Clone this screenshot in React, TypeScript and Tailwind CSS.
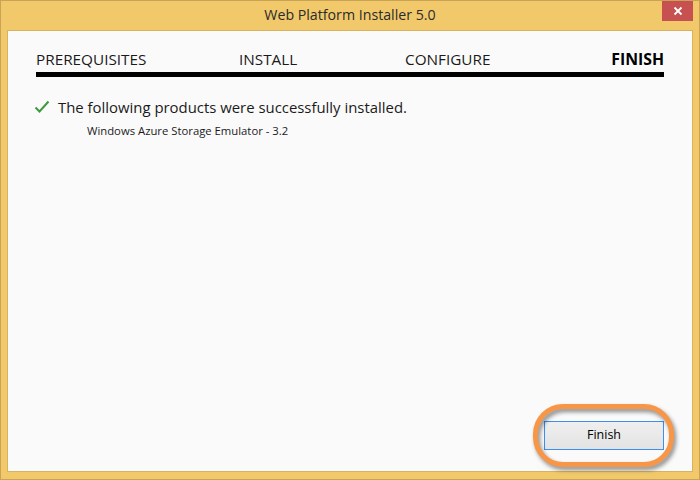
import React from 'react';

const font = { fontFamily: '"Open Sans", "Noto Sans", sans-serif' };

function CheckIcon() {
  return (
    <svg width="16" height="14" viewBox="0 0 16 14" className="shrink-0">
      <path d="M1.5 7.5 L5.5 11.5 L14.5 1.5" fill="none" stroke="#3c9a3c" strokeWidth="2" />
    </svg>
  );
}

function Tabs() {
  return (
    <div className="pt-[18px]">
      <div className="flex items-center h-[20px] text-[15.3px] text-[#1a1a1a] leading-[20px]">
        <span className="w-[203px]">PREREQUISITES</span>
        <span className="w-[166px]">INSTALL</span>
        <span className="flex-1">CONFIGURE</span>
        <span className="font-bold text-black text-[15.8px]">FINISH</span>
      </div>
      <div className="mt-[3px] h-[5px] bg-black" />
    </div>
  );
}

export default function App() {
  return (
    <div
      className="w-[700px] h-[480px] bg-[#f1c96b] border border-[#c9a457] flex flex-col"
      style={font}
    >
      <div className="h-[29px] grid grid-cols-[1fr_auto_1fr] items-start">
        <div />
        <div className="pt-[4px] text-[14.2px] leading-[20px] text-[#2b2b2b]">Web Platform Installer 5.0</div>
        <div className="flex justify-end pr-[6px]">
          <div className="w-[31px] h-[20px] bg-[#c75050] flex items-center justify-center">
            <svg width="10" height="10" viewBox="0 0 10 10">
              <path d="M1.5 1.5 L8.5 8.5 M8.5 1.5 L1.5 8.5" stroke="#fff" strokeWidth="1.8" />
            </svg>
          </div>
        </div>
      </div>
      <div className="mx-[6px] mb-[7px] flex-1 border border-[#d8b25e] bg-[#fafafa] px-[28px] pb-[21px] flex flex-col">
        <Tabs />
        <div className="mt-[19px] flex items-center gap-[8px] h-[22px]">
          <div className="-ml-[2px]"><CheckIcon /></div>
          <span className="text-[14.9px] leading-[22px] text-[#1a1a1a]">
            The following products were successfully installed.
          </span>
        </div>
        <div className="mt-[5px] pl-[51px] text-[11.3px] leading-[16px] text-[#1a1a1a]">
          Windows Azure Storage Emulator - 3.2
        </div>
        <div className="flex-1" />
        <div className="flex justify-end">
          <div className="relative">
            <button className="w-[120px] h-[29px] border border-[#3c8ff0] bg-gradient-to-b from-[#efefef] to-[#e3e3e3] text-[12.5px] text-black">
              Finish
            </button>
            <div className="absolute left-[-11px] right-[-10px] top-[-17px] bottom-[-17px] rounded-[30px] border-[5px] border-[#f79646] [filter:drop-shadow(2px_3px_2px_rgba(0,0,0,0.45))]" />
          </div>
        </div>
      </div>
    </div>
  );
}
